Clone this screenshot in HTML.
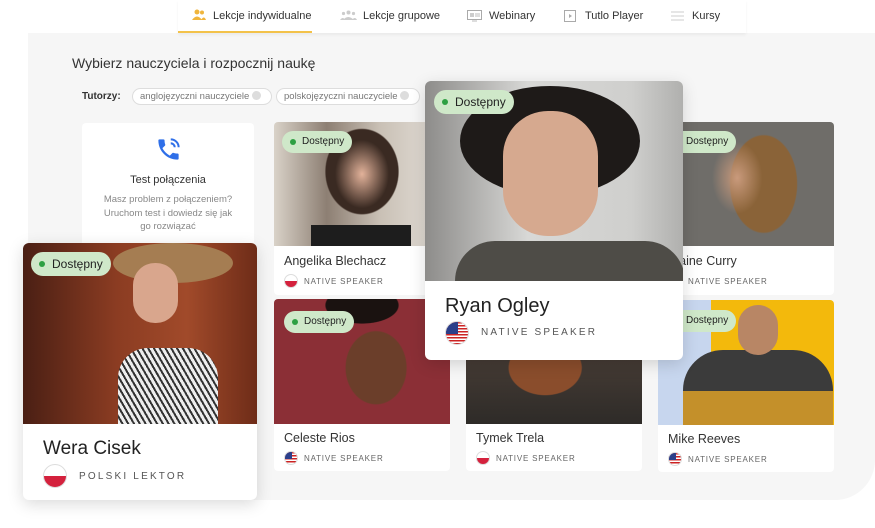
<!DOCTYPE html>
<html><head><meta charset="utf-8"><style>
*{box-sizing:border-box;margin:0;padding:0}
body{width:875px;height:528px;background:#fff;font-family:"Liberation Sans",sans-serif;position:relative;overflow:hidden;color:#333}
.panel{position:absolute;left:28px;top:33px;width:847px;height:467px;background:#f6f6f6;border-bottom-right-radius:40px}
.nav{position:absolute;left:178px;top:0;width:568px;height:33px;background:#fff;box-shadow:0 2px 3px rgba(0,0,0,.05)}
.ul{position:absolute;left:178px;top:31px;width:134px;height:2px;background:#f3c24a}
.card{position:absolute;background:#fff;border-radius:4px;overflow:hidden}
.ph{position:absolute;left:0;top:0;width:100%}
.badge{position:absolute;background:#cfe8c9;border-radius:12px;color:#222;font-size:11px;padding:0 8px 0 20px;height:22px;line-height:22px}
.badge:before{content:"";position:absolute;left:8px;top:50%;margin-top:-3px;width:6px;height:6px;border-radius:50%;background:#2ea043}
.nm{position:absolute;font-size:12.5px;color:#333}
.ns{position:absolute;font-size:8px;letter-spacing:.8px;color:#666}
.fl{position:absolute;width:14px;height:14px;border-radius:50%;overflow:hidden;border:1px solid #ddd}
.pl{background:linear-gradient(#fff 50%,#d4213d 50%)}
.us{background:repeating-linear-gradient(#c22 0 1.5px,#fff 1.5px 3px)}
.us:after{content:"";position:absolute;left:0;top:0;width:55%;height:55%;background:#2b3f8a}
.sh{box-shadow:0 4px 16px rgba(0,0,0,.15)}
</style></head><body>
<div class="panel"></div>
<div class="nav"></div>
<div class="ul"></div>
<svg style="position:absolute;left:192px;top:9px" width="14" height="12"><circle cx="5" cy="3" r="2.5" fill="#f0b53c"/><circle cx="10" cy="3.5" r="2" fill="#f0b53c"/><path d="M0 11 q5-7 10 0z M9 11 q3-5 5 0z" fill="#f0b53c"/></svg>
<span style="position:absolute;left:213px;top:10px;font-size:11px">Lekcje indywidualne</span>
<svg style="position:absolute;left:340px;top:10px" width="17" height="10"><circle cx="8.5" cy="2.5" r="2" fill="#ccc"/><circle cx="3.5" cy="3.5" r="1.6" fill="#ccc"/><circle cx="13.5" cy="3.5" r="1.6" fill="#ccc"/><path d="M3 10q5-6 11 0z M0 10q3-4 5 0z M12 10q3-4 5 0z" fill="#ccc"/></svg>
<span style="position:absolute;left:363px;top:10px;font-size:11px">Lekcje grupowe</span>
<svg style="position:absolute;left:467px;top:10px" width="15" height="12"><rect x=".5" y=".5" width="14" height="9" fill="none" stroke="#aaa"/><rect x="3" y="3" width="4" height="4" fill="#ccc"/><path d="M8 4h5M8 6h5M5 11h5" stroke="#bbb"/></svg>
<span style="position:absolute;left:489px;top:10px;font-size:11px">Webinary</span>
<svg style="position:absolute;left:564px;top:10px" width="12" height="12"><rect x=".5" y=".5" width="11" height="11" fill="none" stroke="#aaa"/><path d="M5 4l3 2-3 2z" fill="#aaa"/></svg>
<span style="position:absolute;left:585px;top:10px;font-size:11px">Tutlo Player</span>
<svg style="position:absolute;left:671px;top:11px" width="13" height="10"><path d="M0 1h13M0 5h13M0 9h13" stroke="#ccc"/></svg>
<span style="position:absolute;left:692px;top:10px;font-size:11px">Kursy</span>

<div style="position:absolute;left:72px;top:55px;font-size:14px;color:#333">Wybierz nauczyciela i rozpocznij naukę</div>
<div style="position:absolute;left:82px;top:91px;font-size:10px;font-weight:bold;color:#333">Tutorzy:</div>
<div style="position:absolute;left:132px;top:88px;height:17px;width:140px;border:1px solid #ddd;border-radius:9px;background:#fff;font-size:9.5px;color:#777;line-height:15px;padding-left:7px">anglojęzyczni nauczyciele <span style="display:inline-block;width:9px;height:9px;border-radius:50%;background:#ddd;vertical-align:-1px"></span></div>
<div style="position:absolute;left:276px;top:88px;height:17px;width:144px;border:1px solid #ddd;border-radius:9px;background:#fff;font-size:9.5px;color:#777;line-height:15px;padding-left:7px">polskojęzyczni nauczyciele <span style="display:inline-block;width:9px;height:9px;border-radius:50%;background:#ddd;vertical-align:-1px"></span></div>

<div class="card" style="left:82px;top:123px;width:172px;height:130px">
<svg style="position:absolute;left:73px;top:13px" width="27" height="27" viewBox="0 0 24 24"><path d="M6.6 10.8c1.4 2.8 3.8 5.1 6.6 6.6l2.2-2.2c.3-.3.7-.4 1-.2 1.1.4 2.3.6 3.6.6.6 0 1 .4 1 1V20c0 .6-.4 1-1 1C10.6 21 3 13.4 3 4c0-.6.4-1 1-1h3.5c.6 0 1 .4 1 1 0 1.3.2 2.5.6 3.6.1.3 0 .7-.2 1z" fill="#2f6fe8"/><path d="M14 3a7 7 0 0 1 7 7M14 6.5a3.5 3.5 0 0 1 3.5 3.5" stroke="#2f6fe8" stroke-width="1.8" fill="none"/></svg>
<div style="position:absolute;top:51px;width:100%;text-align:center;font-size:11px;color:#333">Test połączenia</div>
<div style="position:absolute;top:70px;width:100%;text-align:center;font-size:9.5px;color:#888;line-height:13.5px">Masz problem z połączeniem?<br>Uruchom test i dowiedz się jak<br>go rozwiązać</div>
</div>

<div class="card" style="left:274px;top:122px;width:176px;height:173px">
<div class="ph" style="height:124px;background:radial-gradient(ellipse 30px 38px at 50% 42%,#e2b29a,transparent 90%),radial-gradient(ellipse 60px 70px at 50% 40%,#3a2a22 60%,transparent 62%),linear-gradient(90deg,#d9d2c8,#8d7f73 30%,#c9c0b5 60%,#e8e4de);"></div>
<div style="position:absolute;left:37px;top:103px;width:100px;height:21px;background:#1d1d1d"></div>
<div class="badge" style="left:8px;top:9px;font-size:10px;height:22px">Dostępny</div>
<div class="nm" style="left:10px;top:132px">Angelika Blechacz</div>
<div class="fl pl" style="left:10px;top:152px"></div>
<div class="ns" style="left:30px;top:155px">NATIVE SPEAKER</div>
</div>

<div class="card" style="left:658px;top:122px;width:176px;height:173px">
<div class="ph" style="height:124px;background:radial-gradient(ellipse 28px 40px at 45% 45%,#c99a7c,transparent 90%),radial-gradient(ellipse 55px 80px at 60% 50%,#8a6338 60%,transparent 62%),#6f6d69"></div>
<div class="badge" style="left:8px;top:9px;font-size:10px">Dostępny</div>
<div class="nm" style="left:10px;top:132px">Elaine Curry</div>
<div class="fl us" style="left:10px;top:152px"></div>
<div class="ns" style="left:30px;top:155px">NATIVE SPEAKER</div>
</div>

<div class="card" style="left:274px;top:299px;width:176px;height:172px">
<div class="ph" style="height:125px;background:radial-gradient(ellipse 50px 60px at 58% 55%,#6b3e2a 60%,transparent 62%),radial-gradient(ellipse 60px 30px at 50% 5%,#1a1210 60%,transparent 62%),#8b2f36"></div>
<div class="badge" style="left:10px;top:12px;font-size:10px">Dostępny</div>
<div class="nm" style="left:10px;top:132px">Celeste Rios</div>
<div class="fl us" style="left:10px;top:152px"></div>
<div class="ns" style="left:30px;top:155px">NATIVE SPEAKER</div>
</div>

<div class="card" style="left:466px;top:299px;width:176px;height:172px">
<div class="ph" style="height:125px;background:radial-gradient(ellipse 60px 45px at 45% 55%,#8a4d2c 60%,transparent 62%),linear-gradient(#5a4a40,#2e2b28)"></div>
<div class="nm" style="left:10px;top:132px">Tymek Trela</div>
<div class="fl pl" style="left:10px;top:152px"></div>
<div class="ns" style="left:30px;top:155px">NATIVE SPEAKER</div>
</div>

<div class="card" style="left:658px;top:300px;width:176px;height:172px">
<div class="ph" style="height:125px;background:linear-gradient(90deg,#c7d6ee 0 30%,#f3b90c 30%)"></div>
<div style="position:absolute;left:25px;top:50px;width:150px;height:75px;border-radius:40px 40px 0 0;background:linear-gradient(#3b3b3b 55%,#c4902a 55%)"></div>
<div style="position:absolute;left:80px;top:5px;width:40px;height:50px;border-radius:20px;background:#b88665"></div>
<div class="badge" style="left:8px;top:10px;font-size:10px">Dostępny</div>
<div class="nm" style="left:10px;top:132px">Mike Reeves</div>
<div class="fl us" style="left:10px;top:152px"></div>
<div class="ns" style="left:30px;top:155px">NATIVE SPEAKER</div>
</div>

<div class="card sh" style="left:425px;top:81px;width:258px;height:279px;border-radius:6px">
<div class="ph" style="height:200px;background:linear-gradient(90deg,#8d8c8a,#d8d8d6 40%,#cfcfcd 80%,#b0b0ae)"></div>
<div style="position:absolute;left:35px;top:5px;width:180px;height:110px;border-radius:50%;background:#1e1a18"></div>
<div style="position:absolute;left:78px;top:30px;width:95px;height:125px;border-radius:45px;background:#d6a98f"></div>
<div style="position:absolute;left:30px;top:160px;width:230px;height:40px;border-radius:60px 60px 0 0;background:#4e4c47"></div>
<div class="badge" style="left:9px;top:9px;font-size:12px;height:24px;line-height:24px;padding-left:21px">Dostępny</div>
<div style="position:absolute;left:20px;top:214px;font-size:20px;color:#222">Ryan Ogley</div>
<div class="fl us" style="left:20px;top:240px;width:24px;height:24px"></div>
<div style="position:absolute;left:56px;top:246px;font-size:10px;letter-spacing:2.2px;color:#555">NATIVE SPEAKER</div>
</div>

<div class="card sh" style="left:23px;top:243px;width:234px;height:257px;border-radius:6px">
<div class="ph" style="height:181px;background:linear-gradient(90deg,#4a1f14,#8b3c22 40%,#a14a2a 70%,#6e2c18)"></div>
<div style="position:absolute;left:90px;top:0;width:120px;height:40px;border-radius:50%;background:#a57d52"></div>
<div style="position:absolute;left:110px;top:20px;width:45px;height:60px;border-radius:22px;background:#d9a68d"></div>
<div style="position:absolute;left:95px;top:105px;width:100px;height:76px;background:repeating-linear-gradient(60deg,#eee 0 3px,#333 3px 5px);border-radius:30px 30px 0 0"></div>
<div class="badge" style="left:8px;top:9px;font-size:12px;height:24px;line-height:24px;padding-left:21px">Dostępny</div>
<div style="position:absolute;left:20px;top:195px;font-size:19px;color:#222">Wera Cisek</div>
<div class="fl pl" style="left:20px;top:221px;width:24px;height:24px"></div>
<div style="position:absolute;left:56px;top:228px;font-size:10px;letter-spacing:2.2px;color:#555">POLSKI LEKTOR</div>
</div>
</body></html>
